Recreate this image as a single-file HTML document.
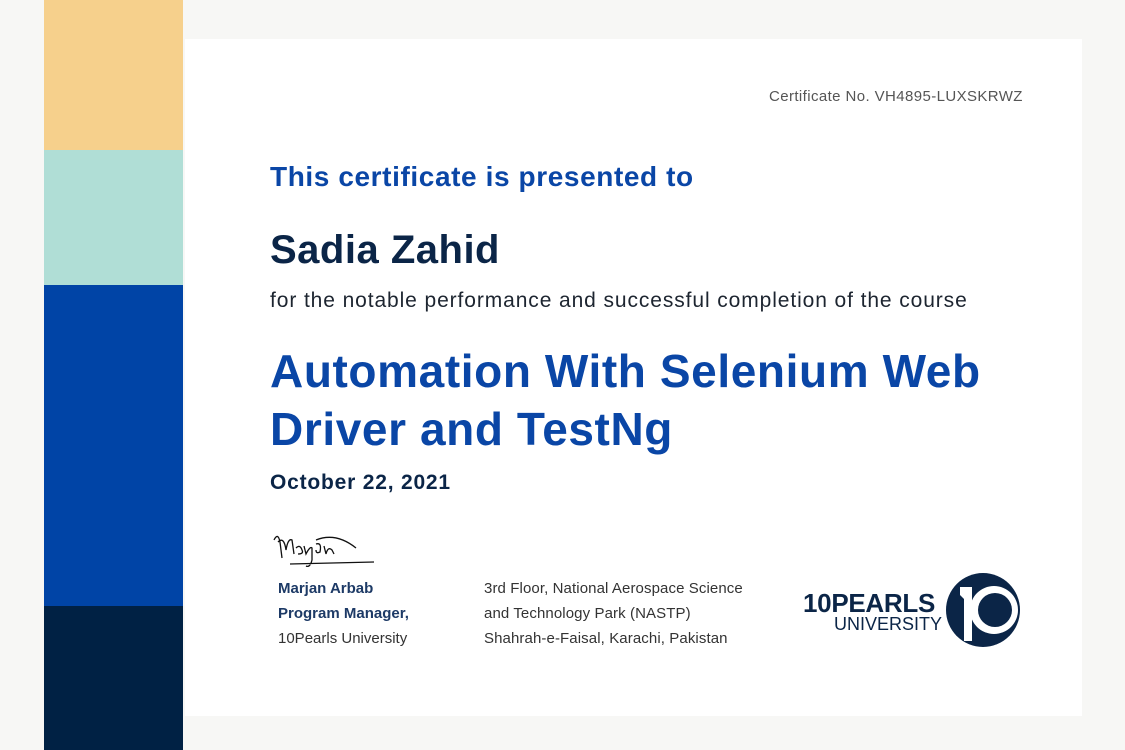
<!DOCTYPE html>
<html><head><style>
body{margin:0;width:1125px;height:750px;background:#f7f7f5;position:relative;overflow:hidden;font-family:"Liberation Sans",Arial,sans-serif}
.bar{position:absolute;left:44px;width:139px}
.card{position:absolute;left:185px;top:39px;width:897px;height:677px;background:#fff}
.t{position:absolute;white-space:nowrap}
</style></head><body>
<div class="bar" style="top:0;height:150px;background:#f6d08c"></div>
<div class="bar" style="top:150px;height:135px;background:#b0ded6"></div>
<div class="bar" style="top:285px;height:321px;background:#0044a6"></div>
<div class="bar" style="top:606px;height:144px;background:#002144"></div>
<div class="card"></div>
<div class="t" style="left:769px;top:88px;font-size:15px;letter-spacing:0.4px;color:#555">Certificate No. VH4895-LUXSKRWZ</div>
<div class="t" style="left:270px;top:161px;font-size:28px;letter-spacing:0.6px;font-weight:bold;color:#0a46a6">This certificate is presented to</div>
<div class="t" style="left:270px;top:228px;font-size:40px;letter-spacing:0.5px;font-weight:bold;color:#0b2547">Sadia Zahid</div>
<div class="t" style="left:270px;top:289px;font-size:21px;letter-spacing:0.9px;color:#1d2530">for the notable performance and successful completion of the course</div>
<div class="t" style="left:270px;top:342px;font-size:46px;letter-spacing:0.6px;line-height:58px;font-weight:bold;color:#0a46a6">Automation With Selenium Web<br>Driver and TestNg</div>
<div class="t" style="left:270px;top:471px;font-size:21px;letter-spacing:0.8px;font-weight:bold;color:#0b2547">October 22, 2021</div>
<svg class="t" style="left:270px;top:530px" width="110" height="45"><path d="M4 10 Q8 2 10 12 L12 28 M8 12 Q14 6 16 20 Q18 8 22 10 L24 24 M26 18 q4 -4 6 2 q2 4 -4 4 M34 16 l2 8 q4 -8 6 -6 l0 12 q-2 8 -6 6 M46 14 q6 -2 4 8 q-4 2 -4 -2 M54 16 l2 8 q2 -8 6 -4 l2 4 M46 10 q20 -8 40 8 M20 34 L104 32" stroke="#111" stroke-width="1.3" fill="none"/></svg>
<div class="t" style="left:278px;top:576px;font-size:15px;line-height:25px;color:#1d3a66;font-weight:bold">Marjan Arbab<br>Program Manager,<br><span style="font-weight:normal;color:#333">10Pearls University</span></div>
<div class="t" style="left:484px;top:576px;font-size:15px;letter-spacing:0.1px;line-height:25px;color:#333">3rd Floor, National Aerospace Science<br>and Technology Park (NASTP)<br>Shahrah-e-Faisal, Karachi, Pakistan</div>
<div class="t" style="left:803px;top:588px;font-size:26px;font-weight:bold;color:#0b2547;letter-spacing:-0.3px">10PEARLS</div>
<div class="t" style="left:834px;top:614px;font-size:18px;color:#0b2547">UNIVERSITY</div>
<svg class="t" style="left:940px;top:565px" width="90" height="90"><circle cx="43" cy="45" r="37" fill="#0b2547"/><circle cx="54" cy="45" r="24" fill="#fff"/><circle cx="55" cy="45" r="17" fill="#0b2547"/><path d="M20 22 L32 22 L32 76 L24 76 L24 34 L20 30Z" fill="#fff"/></svg>
</body></html>
